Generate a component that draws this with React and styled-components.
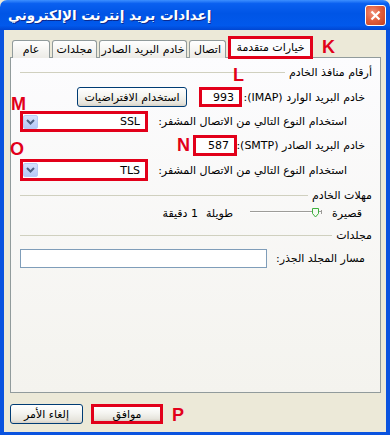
import styled, { createGlobalStyle } from "styled-components";

const GlobalStyle = createGlobalStyle`
  html, body {
    margin: 0;
    padding: 0;
    background: #ece9d8;
  }
  body {
    font-family: "DejaVu Sans", "Noto Sans", sans-serif;
    font-size: 11px;
    color: #000;
  }
  * {
    box-sizing: border-box;
  }
`;

const Window = styled.div`
  position: relative;
  width: 390px;
  height: 435px;
  display: flex;
  flex-direction: column;
  background: #ece9d8;
  overflow: hidden;
`;

const TitleBar = styled.div`
  height: 30px;
  flex: none;
  display: flex;
  align-items: center;
  justify-content: space-between;
  padding: 0 4px 0 8px;
  border-radius: 7px 7px 0 0;
  background: linear-gradient(
    to bottom,
    #3d8fff 0%,
    #0a60f0 12%,
    #0055e6 45%,
    #0159ec 85%,
    #0046d2 100%
  );
`;

const Title = styled.span`
  color: #fff;
  font-weight: bold;
  font-size: 13.5px;
  text-shadow: 1px 1px 0 #0b2a8f;
  white-space: nowrap;
`;

const CloseButton = styled.div`
  width: 21px;
  height: 21px;
  border: 1px solid #fff;
  border-radius: 3px;
  background: radial-gradient(circle at 35% 35%, #f0907a 0%, #e1603f 45%, #c4401f 100%);
  display: flex;
  align-items: center;
  justify-content: center;
`;

const Frame = styled.div`
  flex: 1;
  display: flex;
  flex-direction: column;
  border-style: solid;
  border-color: #0a53df;
  border-width: 0 4px 3px 4px;
  padding: 5px 5px 0 6px;
`;

const TabStrip = styled.div`
  direction: ltr;
  display: flex;
  align-items: flex-end;
  gap: 2px;
  height: 23px;
  padding-left: 2px;
`;

const Tab = styled.div`
  width: ${(p) => p.$w}px;
  height: ${(p) => (p.$active ? 23 : 18)}px;
  display: flex;
  align-items: center;
  justify-content: center;
  white-space: nowrap;
  position: relative;
  z-index: ${(p) => (p.$active ? 2 : 0)};
  border: ${(p) => (p.$active ? "3px solid #e2001a" : "1px solid #919b9c")};
  border-bottom: ${(p) => (p.$active ? "3px solid #e2001a" : "none")};
  border-radius: ${(p) => (p.$active ? "0" : "3px 3px 0 0")};
  background: ${(p) =>
    p.$active ? "#fcfcfe" : "linear-gradient(to bottom, #ffffff, #ecebe6)"};
  margin-bottom: ${(p) => (p.$active ? -1 : 0)}px;
`;

const Panel = styled.div`
  direction: rtl;
  height: 336px;
  margin-top: -1px;
  border: 1px solid #919b9c;
  background: linear-gradient(to bottom, #fcfcfe, #f4f3ee);
  display: flex;
  flex-direction: column;
  padding: 0 8px 0 9px;
`;

const GroupHeader = styled.div`
  display: flex;
  align-items: center;
  gap: 4px;
  height: 14px;
  margin-top: ${(p) => p.$mt}px;
  white-space: nowrap;
`;

const GroupLine = styled.div`
  flex: 1;
  height: 1px;
  background: #d0d0bf;
`;

const Row = styled.div`
  display: flex;
  align-items: center;
  height: ${(p) => p.$h}px;
  margin-top: ${(p) => p.$mt}px;
  padding-right: ${(p) => p.$pr}px;
`;

const Label = styled.span`
  flex: none;
  width: ${(p) => p.$w}px;
  white-space: nowrap;
  text-align: right;
  margin-right: ${(p) => p.$ms || 0}px;
`;

const TextInput = styled.input`
  flex: none;
  width: ${(p) => p.$w}px;
  height: 100%;
  margin: 0;
  margin-right: ${(p) => p.$ms}px;
  border: ${(p) => (p.$marked ? "3px solid #e2001a" : "1px solid #7f9db9")};
  background: #fff;
  font: inherit;
  color: #000;
  text-align: right;
  padding: 0 ${(p) => (p.$marked ? 5 : 4)}px;
  outline: none;
`;

const XpButton = styled.button`
  flex: none;
  width: ${(p) => p.$w}px;
  height: 20px;
  margin: 0;
  margin-right: ${(p) => p.$ms || 0}px;
  padding: 0;
  font: inherit;
  color: #000;
  border: ${(p) => (p.$marked ? "3px solid #e2001a" : "1px solid #003c74")};
  border-radius: ${(p) => (p.$marked ? 0 : 3)}px;
  background: linear-gradient(to bottom, #ffffff 0%, #f4f4f0 45%, #e6e4dc 85%, #d6d0c5 100%);
`;

const Combo = styled.div`
  flex: none;
  width: ${(p) => p.$w}px;
  height: 100%;
  margin-right: ${(p) => p.$ms}px;
  display: flex;
  align-items: center;
  background: #fff;
  border: 3px solid #e2001a;
  padding: 0 5px 0 0;
`;

const ComboValue = styled.span`
  flex: 1;
  text-align: right;
`;

const DropButton = styled.div`
  width: 15px;
  height: 14px;
  border-radius: 2px;
  background: linear-gradient(to bottom, #d6e2fd, #b6c9f7);
  border: 1px solid #b9ccf6;
  display: flex;
  align-items: center;
  justify-content: center;
`;

const Slider = styled.svg`
  flex: none;
  margin-right: ${(p) => p.$ms}px;
`;

const Footer = styled.div`
  direction: rtl;
  display: flex;
  justify-content: flex-end;
  gap: 8px;
  margin-top: 11px;
`;

const Mark = styled.span`
  position: absolute;
  left: ${(p) => p.$x}px;
  top: ${(p) => p.$y}px;
  font-family: "Liberation Sans", Arial, sans-serif;
  font-weight: bold;
  font-size: 18px;
  line-height: 18px;
  color: #e2001a;
`;

function Chevron() {
  return (
    <svg width="9" height="6" viewBox="0 0 9 6">
      <path d="M1 1 L4.5 4.5 L8 1" fill="none" stroke="#4d6185" strokeWidth="2" />
    </svg>
  );
}

function Select({ value }) {
  return (
    <Combo $w={128} $ms={7}>
      <ComboValue>{value}</ComboValue>
      <DropButton>
        <Chevron />
      </DropButton>
    </Combo>
  );
}

export default function App() {
  return (
    <Window>
      <GlobalStyle />
      <TitleBar>
        <Title>إعدادات بريد إنترنت الإلكتروني</Title>
        <CloseButton>
          <svg width="11" height="11" viewBox="0 0 11 11">
            <path d="M1.5 1.5 L9.5 9.5 M9.5 1.5 L1.5 9.5" stroke="#fff" strokeWidth="2.2" />
          </svg>
        </CloseButton>
      </TitleBar>

      <Frame>
        <TabStrip>
          <Tab $w={38}>عام</Tab>
          <Tab $w={45}>مجلدات</Tab>
          <Tab $w={88}>خادم البريد الصادر</Tab>
          <Tab $w={37}>اتصال</Tab>
          <Tab $w={85} $active>
            خيارات متقدمة
          </Tab>
        </TabStrip>

        <Panel>
          <GroupHeader $mt={7}>
            <span>أرقام منافذ الخادم</span>
            <GroupLine />
          </GroupHeader>

          <Row $h={20} $mt={8} $pr={7}>
            <Label $w={117}>خادم البريد الوارد (IMAP):</Label>
            <TextInput $w={43} $ms={6} $marked readOnly value="993" />
            <XpButton $w={110} $ms={12}>
              استخدام الافتراضيات
            </XpButton>
          </Row>

          <Row $h={21} $mt={4} $pr={25}>
            <Label $w={192}>استخدام النوع التالي من الاتصال المشفر:</Label>
            <Select value="SSL" />
          </Row>

          <Row $h={21} $mt={3} $pr={7}>
            <Label $w={120}>خادم البريد الصادر (SMTP):</Label>
            <TextInput $w={44} $ms={8} $marked readOnly value="587" />
          </Row>

          <Row $h={22} $mt={3} $pr={25}>
            <Label $w={192}>استخدام النوع التالي من الاتصال المشفر:</Label>
            <Select value="TLS" />
          </Row>

          <GroupHeader $mt={7}>
            <span>مهلات الخادم</span>
            <GroupLine />
          </GroupHeader>

          <Row $h={16} $mt={3} $pr={10}>
            <Label $w={27}>قصيرة</Label>
            <Slider $ms={13} width="72" height="12" viewBox="0 0 72 12">
              <line x1="0" y1="4.5" x2="72" y2="4.5" stroke="#9d9c99" />
              <line x1="0" y1="5.5" x2="72" y2="5.5" stroke="#ffffff" />
              <line x1="71.5" y1="3" x2="71.5" y2="7" stroke="#9d9c99" />
              <path d="M62.5 1.5 H68.5 V6.5 L65.5 10 L62.5 6.5 Z" fill="#f4fbf2" stroke="#3caf3c" />
            </Slider>
            <Label $w={25} $ms={17}>طويلة</Label>
            <Label $w={33} $ms={10}>1 دقيقة</Label>
          </Row>

          <GroupHeader $mt={7}>
            <span>مجلدات</span>
            <GroupLine />
          </GroupHeader>

          <Row $h={19} $mt={7} $pr={7}>
            <Label $w={88}>مسار المجلد الجذر:</Label>
            <TextInput $w={247} $ms={10} readOnly value="" />
          </Row>
        </Panel>

        <Footer>
          <XpButton $w={72} $marked>
            موافق
          </XpButton>
          <XpButton $w={73}>إلغاء الأمر</XpButton>
        </Footer>
      </Frame>

      <Mark $x={322} $y={38}>K</Mark>
      <Mark $x={233} $y={66}>L</Mark>
      <Mark $x={11} $y={95}>M</Mark>
      <Mark $x={177} $y={136}>N</Mark>
      <Mark $x={10} $y={140}>O</Mark>
      <Mark $x={172} $y={406}>P</Mark>
    </Window>
  );
}
